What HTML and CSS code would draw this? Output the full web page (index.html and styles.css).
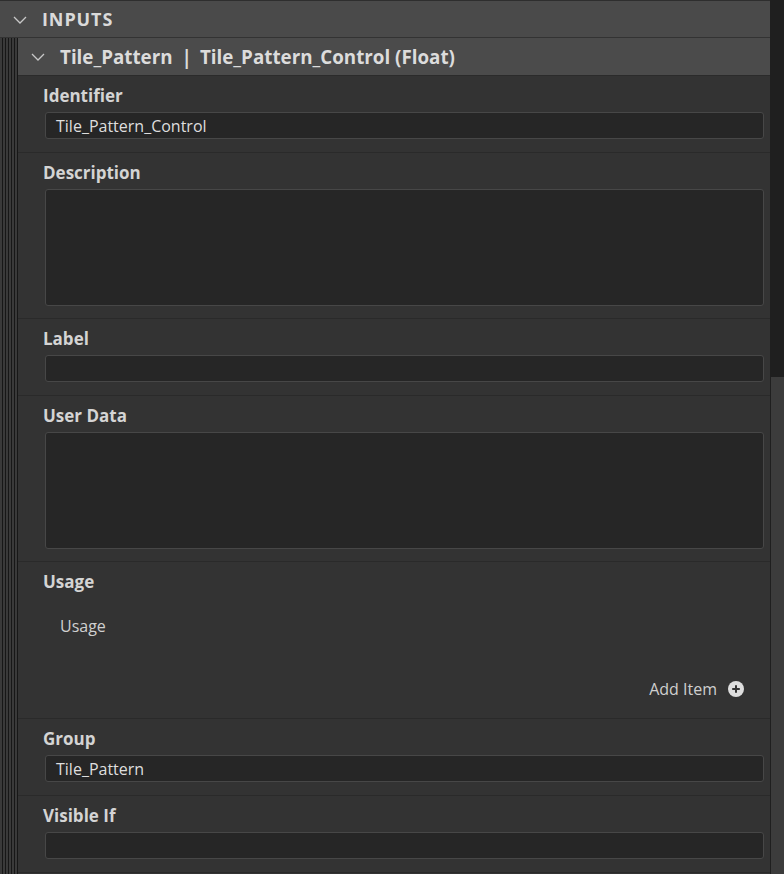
FILE: index.html
```html
<!DOCTYPE html>
<html lang="en">
<head>
    <meta charset="UTF-8">
    <title>Inputs</title>
    <link rel="stylesheet" href="styles.css">
</head>
<body>
    <div class="panel">
        <div class="main">
            <div class="section-header">
                <svg class="chevron" width="14" height="8" viewBox="0 0 14 8"><polyline points="1,1 7,7 13,1" fill="none" stroke="#c8c8c8" stroke-width="1.3"/></svg>
                <span class="section-title">INPUTS</span>
            </div>
            <div class="nest">
                <div class="stripes"></div>
                <div class="group">
                    <div class="group-header">
                        <svg class="chevron" width="14" height="8" viewBox="0 0 14 8"><polyline points="1,1 7,7 13,1" fill="none" stroke="#c8c8c8" stroke-width="1.3"/></svg>
                        <span class="group-title">Tile_Pattern<span class="sep">|</span>Tile_Pattern_Control (Float)</span>
                    </div>

                    <div class="field">
                        <div class="label">Identifier</div>
                        <div class="input">Tile_Pattern_Control</div>
                    </div>
                    <div class="field tall">
                        <div class="label">Description</div>
                        <div class="input textarea"></div>
                    </div>
                    <div class="field">
                        <div class="label">Label</div>
                        <div class="input"></div>
                    </div>
                    <div class="field tall">
                        <div class="label">User Data</div>
                        <div class="input textarea"></div>
                    </div>
                    <div class="field usage">
                        <div class="label">Usage</div>
                        <div class="usage-item">Usage</div>
                        <div class="add-row">
                            <span>Add Item</span>
                            <svg width="16" height="16" viewBox="0 0 16 16"><circle cx="8" cy="8" r="8" fill="#dedede"/><path d="M8 4.2v7.6M4.2 8h7.6" stroke="#333" stroke-width="2"/></svg>
                        </div>
                    </div>
                    <div class="field">
                        <div class="label">Group</div>
                        <div class="input">Tile_Pattern</div>
                    </div>
                    <div class="field">
                        <div class="label">Visible If</div>
                        <div class="input"></div>
                    </div>
                </div>
            </div>
        </div>
        <div class="scrollbar">
            <div class="thumb"></div>
        </div>
    </div>
</body>
</html>
```

FILE: styles.css
```css
body {
    margin: 0;
    background: #333333;
    font-family: "Open Sans", "Noto Sans", sans-serif;
    color: #d6d6d6;
    overflow: hidden;
}

.panel {
    display: flex;
    height: 874px;
}

.main {
    flex: 1;
    display: flex;
    flex-direction: column;
}

.scrollbar {
    width: 14px;
    background: #1f1f1f;
    display: flex;
    flex-direction: column;
    padding-top: 377px;
}

.thumb {
    flex: 1;
    margin-left: 1px;
    background: #3c3c3c;
}

.section-header {
    height: 36px;
    display: flex;
    align-items: center;
    background: #4a4a4a;
    border-top: 1px solid #2e2e2e;
    border-bottom: 1px solid #333;
}

.section-header .chevron {
    margin: 1px 15px 0 13px;
}

.section-title {
    font-weight: 700;
    font-size: 18px;
    letter-spacing: 0.9px;
    color: #dadada;
}

.nest {
    flex: 1;
    display: flex;
}

.stripes {
    width: 18px;
    background: repeating-linear-gradient(to right, #3a3a3a 0 2px, #171717 2px 3px);
}

.group {
    flex: 1;
}

.group-header {
    height: 37px;
    display: flex;
    align-items: center;
    background: #4b4b4b;
    border-bottom: 1px solid #2b2b2b;
}

.group-header .chevron {
    margin: 1px 15px 0 13px;
}

.group-title {
    font-weight: 700;
    font-size: 18.8px;
    color: #dcdcdc;
}

.sep {
    margin: 0 8px 0 9px;
}

.field {
    padding: 10px 6px 13px 25px;
    border-bottom: 1px solid #2a2a2a;
}

.field.tall {
    padding-bottom: 12px;
}

.label {
    font-weight: 700;
    font-size: 17px;
    line-height: 20px;
    color: #d4d4d4;
    margin-bottom: 6px;
}

.input {
    height: 25px;
    margin-left: 2px;
    background: #262626;
    border: 1px solid #474747;
    border-radius: 3px;
    font-size: 16px;
    line-height: 26px;
    padding-left: 10px;
    color: #dedede;
}

.textarea {
    height: 115px;
}

.usage {
    padding-bottom: 17px;
}

.usage .usage-item {
    margin: 22px 0 0 17px;
    font-size: 16px;
    line-height: 24px;
    color: #d0d0d0;
}

.add-row {
    display: flex;
    justify-content: flex-end;
    align-items: center;
    gap: 11px;
    margin: 39px 20px 0 0;
    height: 24px;
    font-size: 16px;
    color: #cfcfcf;
}
```
